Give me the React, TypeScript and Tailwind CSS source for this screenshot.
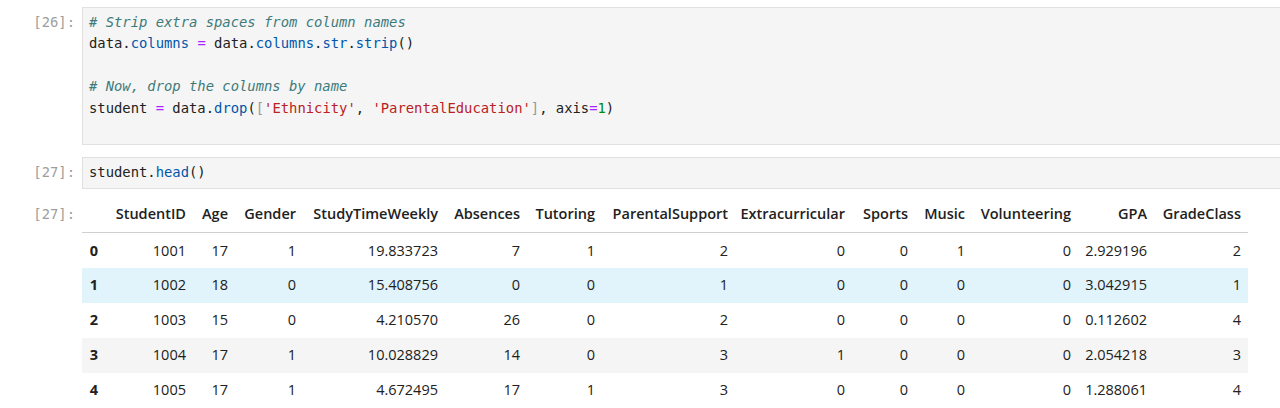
import React from 'react';

const mono = '[font-family:"DejaVu_Sans_Mono","Liberation_Mono",monospace]';

type Tok = [string, string?];

const C = {
  com: 'text-[#3d7b7b] italic',
  prop: 'text-[#0055aa]',
  op: 'text-[#aa22ff]',
  str: 'text-[#ba2121]',
  num: 'text-[#008800]',
  br: 'text-[#999999]',
};

const code1: Tok[][] = [
  [['# Strip extra spaces from column names', C.com]],
  [['data.'], ['columns', C.prop], [' '], ['=', C.op], [' data.'], ['columns', C.prop], ['.'], ['str', C.prop], ['.'], ['strip', C.prop], ['()']],
  [],
  [['# Now, drop the columns by name', C.com]],
  [
    ['student '], ['=', C.op], [' data.'], ['drop', C.prop], ['('], ['[', C.br], ["'Ethnicity'", C.str], [', '],
    ["'ParentalEducation'", C.str], [']', C.br], [', axis'], ['=', C.op], ['1', C.num], [')'],
  ],
  [],
];

const code2: Tok[][] = [[['student.'], ['head', C.prop], ['()']]];

function CodeLines({ lines }: { lines: Tok[][] }) {
  return (
    <div className={`${mono} text-[13.85px] leading-[21.4px] text-[#212121] py-1 px-[6px] whitespace-pre`}>
      {lines.map((l, i) => (
        <div key={i} className="h-[21.4px]">
          {l.map(([t, c], j) => (
            <span key={j} className={c}>
              {t}
            </span>
          ))}
        </div>
      ))}
    </div>
  );
}

function Prompt({ n, className = '' }: { n: number; className?: string }) {
  return (
    <div className={`${mono} w-[82px] shrink-0 text-right pr-[7px] text-[13.85px] text-[#9e9e9e] ${className}`}>
      [{n}]:
    </div>
  );
}

function CodeCell({ n, lines }: { n: number; lines: Tok[][] }) {
  return (
    <div className="flex">
      <Prompt n={n} className="pt-[5px] leading-[21.4px]" />
      <div className="flex-1 border border-[#e0e0e0] border-r-0 bg-[#f5f5f5]">
        <CodeLines lines={lines} />
      </div>
    </div>
  );
}

const cols: [string, string][] = [
  ['', 'w-[23px]'],
  ['StudentID', 'w-[88px]'],
  ['Age', 'w-[42px]'],
  ['Gender', 'w-[68px]'],
  ['StudyTimeWeekly', 'w-[142px]'],
  ['Absences', 'w-[82px]'],
  ['Tutoring', 'w-[75px]'],
  ['ParentalSupport', 'w-[133px]'],
  ['Extracurricular', 'w-[117px]'],
  ['Sports', 'w-[63px]'],
  ['Music', 'w-[57px]'],
  ['Volunteering', 'w-[106px]'],
  ['GPA', 'w-[76px]'],
  ['GradeClass', 'w-[94px]'],
];

const rows: string[][] = [
  ['0', '1001', '17', '1', '19.833723', '7', '1', '2', '0', '0', '1', '0', '2.929196', '2'],
  ['1', '1002', '18', '0', '15.408756', '0', '0', '1', '0', '0', '0', '0', '3.042915', '1'],
  ['2', '1003', '15', '0', '4.210570', '26', '0', '2', '0', '0', '0', '0', '0.112602', '4'],
  ['3', '1004', '17', '1', '10.028829', '14', '0', '3', '1', '0', '0', '0', '2.054218', '3'],
  ['4', '1005', '17', '1', '4.672495', '17', '1', '3', '0', '0', '0', '0', '1.288061', '4'],
];

const rowBg = ['', 'bg-[#e1f3fb]', '', 'bg-[#f5f5f5]', ''];

export default function App() {
  return (
    <div className="w-[1280px] h-[408px] overflow-hidden bg-white pt-[7px]">
      <CodeCell n={26} lines={code1} />
      <div className="h-[12px]" />
      <CodeCell n={27} lines={code2} />
      <div className="flex mt-[7px]">
        <Prompt n={27} className="h-[37px] leading-[37px]" />
        <table className='table-fixed border-collapse [font-family:"Open_Sans","Noto_Sans",sans-serif] text-[14.5px] text-[#212121]'>
          <thead>
            <tr className="border-b border-[#cfcfcf]">
              {cols.map(([h, w], i) => (
                <th key={i} className={`${w} h-[37px] p-0 pr-[7px] text-right font-semibold align-middle`}>
                  {h}
                </th>
              ))}
            </tr>
          </thead>
          <tbody>
            {rows.map((r, i) => (
              <tr key={i} className={rowBg[i]}>
                {r.map((v, j) =>
                  j === 0 ? (
                    <th key={j} className="h-[35px] p-0 pr-[7px] text-right font-bold align-middle">
                      {v}
                    </th>
                  ) : (
                    <td key={j} className="h-[35px] p-0 pr-[7px] text-right align-middle">
                      {v}
                    </td>
                  ),
                )}
              </tr>
            ))}
          </tbody>
        </table>
      </div>
    </div>
  );
}
